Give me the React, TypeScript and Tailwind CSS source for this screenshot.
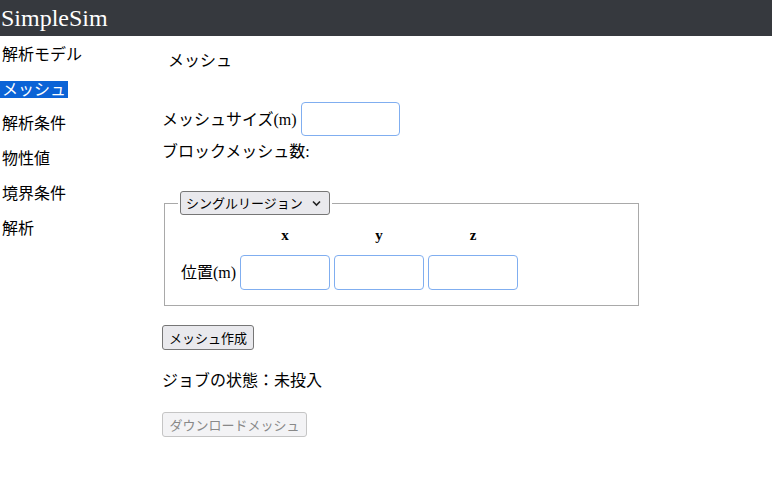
import React from "react";

export default function App() {
  const items = ["解析モデル", "メッシュ", "解析条件", "物性値", "境界条件", "解析"];
  return (
    <div className="w-[772px] h-[504px] bg-white text-black font-['Liberation_Serif','Noto_Sans_CJK_JP',serif]">
      <div className="h-[36px] bg-[#36393e] text-white text-[24px] leading-[36px] pl-[1px]">SimpleSim</div>
      <div className="flex">
        <div className="w-[162px] shrink-0 flex flex-col items-start pt-[8px] gap-[13px] text-[16px] leading-[22px]">
          {items.map((t, i) => (
            <div key={t} className={i === 1 ? "bg-[#0b63d6] text-white px-[2px] leading-[17px] my-[2px]" : "px-[2px]"}>{t}</div>
          ))}
        </div>
        <div className="flex flex-col items-start text-[16px] leading-[22px]">
          <div className="pl-[6px] mt-[14px]">メッシュ</div>
          <div className="flex items-center mt-[30px]">
            <span className="mt-[2px]">メッシュサイズ(m)</span>
            <input className="ml-[4px] w-[99px] h-[34px] border border-[#80aef0] rounded-[4px] outline-none" />
          </div>
          <div className="mt-[5px]">ブロックメッシュ数:</div>
          <fieldset className="ml-[2px] mt-[28px] w-[475px] border border-[#a9a9a9] pl-[13px] pr-[15px] pb-[15px] pt-[4px]">
            <legend className="px-[2px]">
              <div className="flex items-center justify-between whitespace-nowrap w-[150px] h-[24px] pl-[5px] pr-[7px] border border-[#767676] rounded-[3px] bg-[#e9e9ed] text-[13px] leading-[20px] font-['Noto_Sans_CJK_JP',sans-serif]">
                <span>シングルリージョン</span>
                <svg width="11" height="10" viewBox="0 0 11 10"><path d="M2 3.5 L5.5 7 L9 3.5" stroke="#222" strokeWidth="1.6" fill="none" /></svg>
              </div>
            </legend>
            <div className="flex items-end mt-[5px]">
              <div className="w-[62px]" />
              <div className="flex gap-[4px] font-bold text-[15px]">
                <div className="w-[90px] text-center">x</div>
                <div className="w-[90px] text-center">y</div>
                <div className="w-[90px] text-center">z</div>
              </div>
            </div>
            <div className="flex items-center mt-[9px]">
              <span className="pl-[3px] w-[62px]">位置(m)</span>
              <div className="flex gap-[4px]">
                <input className="w-[90px] h-[35px] border border-[#80aef0] rounded-[4px] outline-none" />
                <input className="w-[90px] h-[35px] border border-[#80aef0] rounded-[4px] outline-none" />
                <input className="w-[90px] h-[35px] border border-[#80aef0] rounded-[4px] outline-none" />
              </div>
            </div>
          </fieldset>
          <button className="mt-[19px] w-[92px] h-[25px] border border-[#767676] rounded-[3px] bg-[#e9e9ed] text-[13px] leading-[18px] font-['Noto_Sans_CJK_JP',sans-serif]">メッシュ作成</button>
          <div className="mt-[20px]">ジョブの状態：未投入</div>
          <button disabled className="mt-[20px] w-[145px] h-[25px] border border-[#c5c5c5] rounded-[3px] bg-[#f3f3f5] text-[#888] text-[13px] leading-[18px] font-['Noto_Sans_CJK_JP',sans-serif]">ダウンロードメッシュ</button>
        </div>
      </div>
    </div>
  );
}
